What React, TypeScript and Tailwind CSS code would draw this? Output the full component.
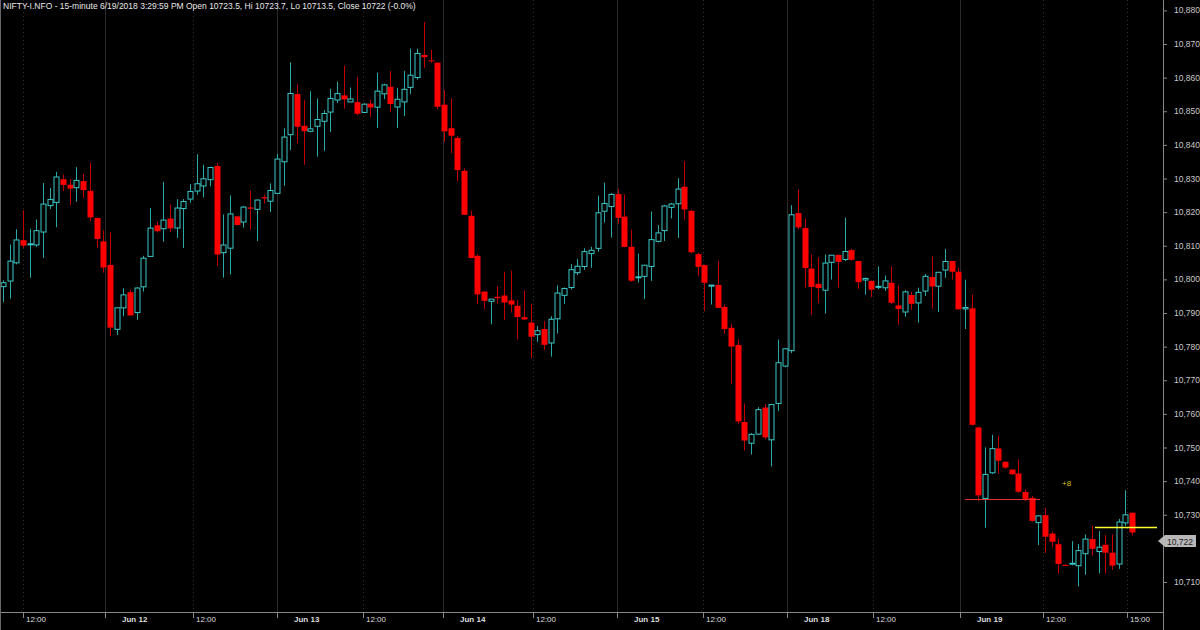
import React from "react";

const pts: [number, number][] = [
  [0,10800],[15,10810],[30,10808],[45,10825],[55,10828],[75,10828],[85,10823],[100,10812],[110,10783],[118,10797],[130,10790],[140,10800],[150,10818],[165,10815],[180,10820],[195,10828],[210,10832],[218,10805],[225,10815],[240,10820],[260,10825],[275,10830],[285,10845],[290,10856],[300,10842],[310,10845],[320,10850],[330,10853],[345,10853],[355,10850],[370,10849],[385,10858],[395,10850],[410,10858],[420,10869],[430,10868],[440,10845],[450,10843],[460,10826],[470,10808],[480,10795],[490,10793],[500,10797],[515,10788],[530,10785],[545,10780],[555,10792],[570,10800],[580,10808],[590,10810],[600,10821],[610,10823],[620,10815],[630,10798],[640,10800],[650,10808],[660,10818],[670,10823],[680,10828],[690,10812],[700,10800],[710,10796],[720,10792],[730,10782],[740,10750],[750,10752],[760,10760],[765,10752],[775,10770],[785,10780],[790,10822],[795,10820],[800,10810],[810,10795],[820,10800],[835,10808],[850,10808],[860,10798],[880,10800],[900,10793],[915,10795],[930,10800],[940,10800],[950,10808],[960,10790],[966,10790],[970,10760],[977,10737],[985,10745],[995,10748],[1010,10740],[1030,10730],[1045,10725],[1060,10714],[1070,10712],[1080,10718],[1090,10722],[1100,10723],[1110,10710],[1118,10725],[1125,10732],[1131,10724],[1137,10722],
];
const interp = (x: number) => {
  for (let i = 1; i < pts.length; i++) {
    if (x <= pts[i][0]) {
      const [x0, y0] = pts[i - 1], [x1, y1] = pts[i];
      return y0 + ((x - x0) / (x1 - x0)) * (y1 - y0);
    }
  }
  return pts[pts.length - 1][1];
};
let seed = 7;
const rnd = () => { seed = (seed * 16807) % 2147483647; return seed / 2147483647; };
const Y = (p: number) => 44 + (10870 - p) * 3.3625;

type C = { x: number; o: number; c: number; h: number; l: number };
const candles: C[] = [];
let prev = 10797;
for (let x = 3; x <= 1138; x += 6.68) {
  const c = interp(x) + (rnd() - 0.5) * 6;
  const o = prev + (rnd() - 0.5) * 2;
  const h = Math.max(o, c) + rnd() * rnd() * 12;
  const l = Math.min(o, c) - rnd() * rnd() * 12;
  candles.push({ x, o, c, h, l });
  prev = c;
}

const labels = Array.from({ length: 18 }, (_, i) => 10880 - i * 10);
const xLabels: [number, string, boolean][] = [
  [23, "12:00", false],[105, "Jun 12", true],[193, "12:00", false],[277, "Jun 13", true],[363, "12:00", false],[443, "Jun 14", true],[533, "12:00", false],[617, "Jun 15", true],[703, "12:00", false],[787, "Jun 18", true],[873, "12:00", false],[960, "Jun 19", true],[1043, "12:00", false],[1127, "15:00", false],
];

export default function App() {
  return (
    <div className="relative w-[1200px] h-[630px] bg-black overflow-hidden" style={{ fontFamily: '"Liberation Sans", Arial, sans-serif' }}>
      <svg width="1200" height="630" className="block">
        {xLabels.map(([x, , solid], i) => (
          <line key={i} x1={x + 0.5} x2={x + 0.5} y1={0} y2={612} stroke={solid ? "#2a2a2a" : "#333"} strokeDasharray={solid ? undefined : "1 3"} />
        ))}
        {candles.map((k, i) => {
          const up = k.c >= k.o;
          const col = up ? "#3cc8c8" : "#ff0000";
          const top = Y(Math.max(k.o, k.c));
          const bh = Math.max(1, Math.abs(Y(k.o) - Y(k.c)));
          const cx = Math.round(k.x) + 0.5;
          return (
            <g key={i}>
              <line x1={cx} x2={cx} y1={Y(k.h)} y2={Y(k.l)} stroke={up ? "#2aa8a8" : "#c00000"} strokeWidth={1} />
              {up ? (
                <rect x={cx - 2.5} y={top} width={5} height={bh} fill="#000" stroke={col} strokeWidth={1} />
              ) : (
                <rect x={cx - 3} y={top} width={6} height={bh} fill={col} />
              )}
            </g>
          );
        })}
        <line x1={965} x2={1040} y1={499.5} y2={499.5} stroke="#e03030" strokeWidth={1.2} />
        <line x1={1095} x2={1157} y1={527.5} y2={527.5} stroke="#ffff33" strokeWidth={1.3} />
        <text x={1062} y={486} fill="#d4c020" fontSize={8}>+8</text>
        <line x1={0} x2={1163} y1={612.5} y2={612.5} stroke="#888" />
        <line x1={1163.5} x2={1163.5} y1={0} y2={630} stroke="#888" />
        <line x1={0.5} x2={0.5} y1={0} y2={630} stroke="#666" />
        {labels.filter((p) => p !== 10720).map((p) => (
          <g key={p}>
            <line x1={1163} x2={1167} y1={Y(p) + 0.5} y2={Y(p) + 0.5} stroke="#888" />
            <text x={1174} y={Y(p) + 3} fill="#c8c8c8" fontSize={8.5}>{p.toLocaleString("en-US")}</text>
          </g>
        ))}
        <polygon points="1158,541 1165,535 1196,535 1196,547 1165,547" fill="#b8b8b8" />
        <text x={1167} y={544.5} fill="#222" fontSize={8.5}>10,722</text>
        {xLabels.map(([x, t, solid], i) => (
          <g key={"l" + i}>
            <line x1={x + 0.5} x2={x + 0.5} y1={612} y2={618} stroke="#888" />
            <text x={solid ? x + 17 : x + 3} y={622} fill="#ddd" fontSize={8} fontWeight={solid ? "bold" : "normal"}>{t}</text>
          </g>
        ))}
      </svg>
      <div className="absolute left-[3px] top-[1px] text-[8.5px] leading-[10px] text-[#e8e8e8]">
        NIFTY-I.NFO - 15-minute 6/19/2018 3:29:59 PM Open 10723.5, Hi 10723.7, Lo 10713.5, Close 10722 (-0.0%)
      </div>
    </div>
  );
}
